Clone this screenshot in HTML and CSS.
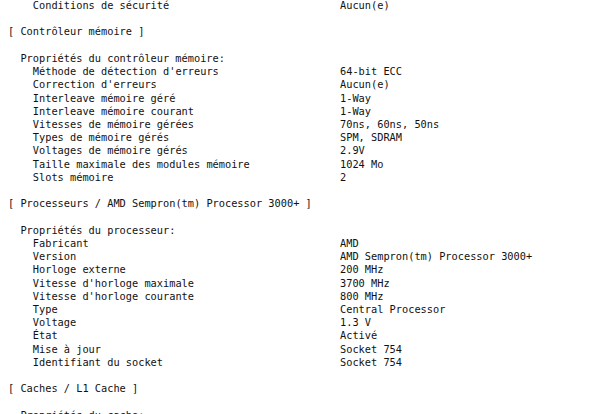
FILE: index.html
```html
<!DOCTYPE html>
<html lang="fr">
<head>
<meta charset="utf-8">
<link rel="stylesheet" href="styles.css">
</head>
<body>
<div class="report">
  <div class="row"><span class="k">Conditions de sécurité</span><span class="v">Aucun(e)</span></div>

  <div class="title">[ Contrôleur mémoire ]</div>
  <div class="group">Propriétés du contrôleur mémoire:</div>
  <div class="row"><span class="k">Méthode de détection d'erreurs</span><span class="v">64-bit ECC</span></div>
  <div class="row"><span class="k">Correction d'erreurs</span><span class="v">Aucun(e)</span></div>
  <div class="row"><span class="k">Interleave mémoire géré</span><span class="v">1-Way</span></div>
  <div class="row"><span class="k">Interleave mémoire courant</span><span class="v">1-Way</span></div>
  <div class="row"><span class="k">Vitesses de mémoire gérées</span><span class="v">70ns, 60ns, 50ns</span></div>
  <div class="row"><span class="k">Types de mémoire gérés</span><span class="v">SPM, SDRAM</span></div>
  <div class="row"><span class="k">Voltages de mémoire gérés</span><span class="v">2.9V</span></div>
  <div class="row"><span class="k">Taille maximale des modules mémoire</span><span class="v">1024 Mo</span></div>
  <div class="row"><span class="k">Slots mémoire</span><span class="v">2</span></div>

  <div class="title">[ Processeurs / AMD Sempron(tm) Processor 3000+ ]</div>
  <div class="group">Propriétés du processeur:</div>
  <div class="row"><span class="k">Fabricant</span><span class="v">AMD</span></div>
  <div class="row"><span class="k">Version</span><span class="v">AMD Sempron(tm) Processor 3000+</span></div>
  <div class="row"><span class="k">Horloge externe</span><span class="v">200 MHz</span></div>
  <div class="row"><span class="k">Vitesse d'horloge maximale</span><span class="v">3700 MHz</span></div>
  <div class="row"><span class="k">Vitesse d'horloge courante</span><span class="v">800 MHz</span></div>
  <div class="row"><span class="k">Type</span><span class="v">Central Processor</span></div>
  <div class="row"><span class="k">Voltage</span><span class="v">1.3 V</span></div>
  <div class="row"><span class="k">État</span><span class="v">Activé</span></div>
  <div class="row"><span class="k">Mise à jour</span><span class="v">Socket 754</span></div>
  <div class="row"><span class="k">Identifiant du socket</span><span class="v">Socket 754</span></div>

  <div class="title">[ Caches / L1 Cache ]</div>
  <div class="group">Propriétés du cache:</div>
  <div class="row"><span class="k">Type</span><span class="v">Interne</span></div>
</div>
</body>
</html>
```
FILE: styles.css
```css
html, body {
  margin: 0;
  padding: 0;
  background: #ffffff;
  overflow: hidden;
}
.report {
  font-family: "DejaVu Sans Mono", "Liberation Mono", monospace;
  font-size: 10.3px;
  line-height: 13.22px;
  color: #111111;
  padding: 0 0 0 8px;
  margin-top: -1px;
}
.row {
  display: grid;
  grid-template-columns: calc(332px - 4ch) auto;
  padding-left: 4ch;
  white-space: pre;
}
.title {
  margin-top: 13.22px;
  white-space: pre;
}
.group {
  margin-top: 13.22px;
  padding-left: 2ch;
  white-space: pre;
}
```
